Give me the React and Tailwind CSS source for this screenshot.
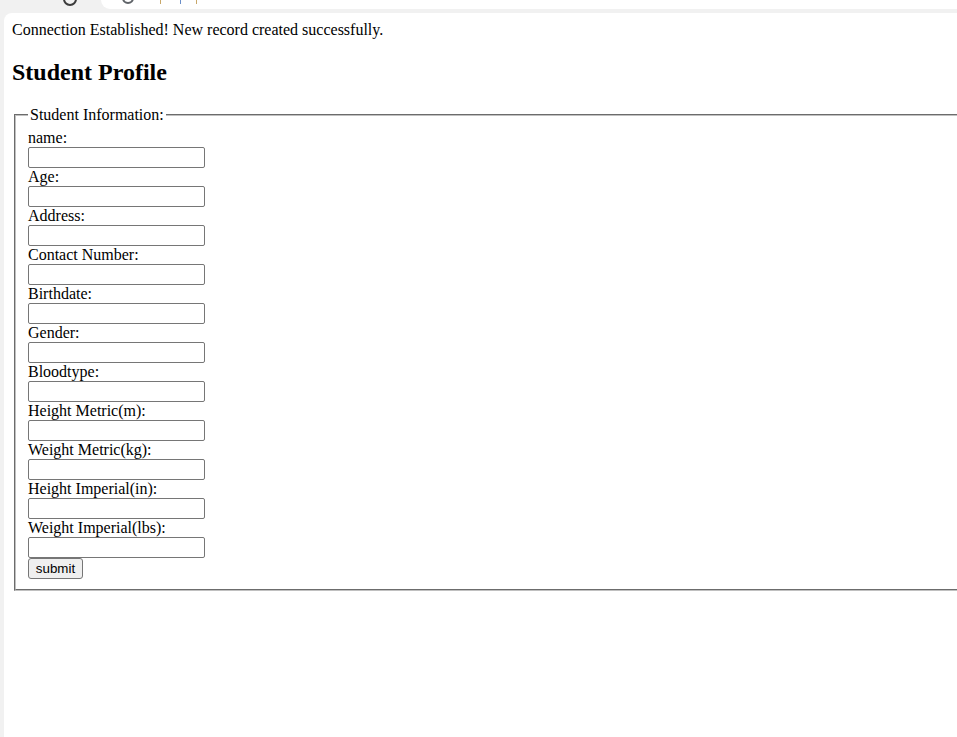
export default function App() {
  const fields = [
    "name:",
    "Age:",
    "Address:",
    "Contact Number:",
    "Birthdate:",
    "Gender:",
    "Bloodtype:",
    "Height Metric(m):",
    "Weight Metric(kg):",
    "Height Imperial(in):",
    "Weight Imperial(lbs):",
  ];

  return (
    <div className="h-[737px] w-[957px] overflow-hidden bg-[#f1f1f1] flex flex-col font-['Liberation_Serif',serif] text-black">
      {/* Browser chrome strip */}
      <div className="h-[13px] shrink-0 flex relative">
        <div className="w-[101px] shrink-0 relative">
          <div className="absolute left-[63px] top-[-8px] w-[14px] h-[14px] rounded-full border-2 border-[#3c3c3c]"></div>
        </div>
        <div className="flex-1 h-[9px] bg-white rounded-bl-[10px] relative">
          <div className="absolute left-[21px] top-[-8px] w-[12px] h-[12px] rounded-full border-2 border-[#5f6368]"></div>
          <div className="absolute left-[59px] top-[0px] w-[1px] h-[4px] bg-[#c9a86a]"></div>
          <div className="absolute left-[79px] top-[0px] w-[1px] h-[4px] bg-[#6b8fc9]"></div>
          <div className="absolute left-[95px] top-[0px] w-[1px] h-[4px] bg-[#c9a86a]"></div>
        </div>
      </div>

      <div className="flex flex-1 min-h-0">
        <div className="w-[4px] shrink-0"></div>
        <div className="flex-1 bg-white rounded-tl-[8px] p-2 overflow-hidden">
          <div className="text-base leading-[18px]">
            Connection Established! New record created successfully.
          </div>
          <h2 className="text-2xl font-bold leading-[28px] mt-[19px] mb-[20px]">
            Student Profile
          </h2>

          <fieldset className="mx-[2px] w-[1100px] border-2 [border-style:groove] border-[#c0c0c0] pt-[5px] px-[12px] pb-[10px]">
            <legend className="px-[2px] text-base leading-[18px]">
              Student Information:
            </legend>
            <form className="flex flex-col items-start">
              {fields.map((label) => (
                <div key={label} className="flex flex-col items-start">
                  <label className="text-base leading-[18px]">{label}</label>
                  <input
                    type="text"
                    className="w-[177px] h-[21px] border border-[#767676] rounded-[2px] bg-white px-[2px] text-[13.33px] font-['Liberation_Sans',sans-serif]"
                  />
                </div>
              ))}
              <button
                type="button"
                className="h-[21px] w-[55px] border border-[#767676] rounded-[3px] bg-[#efefef] text-[13.33px] leading-[15px] font-['Liberation_Sans',sans-serif] text-black"
              >
                submit
              </button>
            </form>
          </fieldset>
        </div>
      </div>
    </div>
  );
}
